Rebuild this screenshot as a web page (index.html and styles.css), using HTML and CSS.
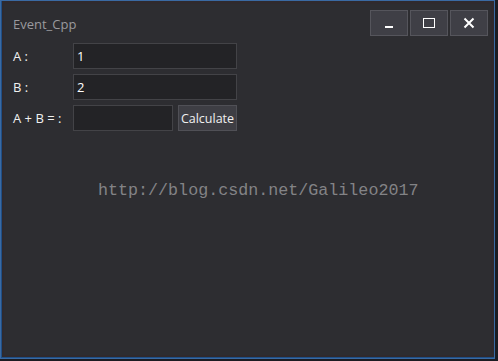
FILE: index.html
```html
<!DOCTYPE html>
<html lang="en">
<head>
    <meta charset="UTF-8">
    <title>Event_Cpp</title>
    <link rel="stylesheet" href="styles.css">
</head>
<body>
    <div class="window">
        <div class="titlebar">
            <span class="title">Event_Cpp</span>
            <div class="controls">
                <button class="ctrl"><span class="min-bar"></span></button>
                <button class="ctrl"><span class="max-box"></span></button>
                <button class="ctrl">
                    <svg width="12" height="12" viewBox="0 0 12 12">
                        <path d="M1.5 1.5 L10.5 10.5 M10.5 1.5 L1.5 10.5" stroke="#fff" stroke-width="2"/>
                    </svg>
                </button>
            </div>
        </div>

        <div class="form">
            <label class="lbl">A :</label>
            <input class="field" type="text" value="1">

            <label class="lbl">B :</label>
            <input class="field" type="text" value="2">

            <label class="lbl">A + B = :</label>
            <div class="result-row">
                <input class="field short" type="text" value="">
                <button class="calc">Calculate</button>
            </div>
        </div>

        <div class="watermark">http://blog.csdn.net/Galileo2017</div>
    </div>
</body>
</html>
```

FILE: styles.css
```css
* {
    margin: 0;
    padding: 0;
    box-sizing: border-box;
    font-family: 'Open Sans', 'Noto Sans', sans-serif;
}

body {
    width: 498px;
    height: 361px;
    background: #1b1c22;
    overflow: hidden;
}

.window {
    position: relative;
    width: 495px;
    height: 359px;
    background: #2d2d31;
    border: 1px solid #3a6aa3;
    box-shadow: inset 1px 0 0 #1f4f86, inset 0 -1px 0 #1f4f86, inset 0 0 0 3px #2f2a2e;
}

.titlebar {
    display: flex;
    justify-content: space-between;
    align-items: flex-start;
    padding: 9px 6px 0 12px;
}

.title {
    color: #9a9a9e;
    font-size: 13px;
    padding-top: 5px;
}

.controls {
    display: flex;
    gap: 2px;
}

.ctrl {
    width: 38px;
    height: 26px;
    background: #3f3f46;
    border: 1px solid #55555c;
    display: flex;
    align-items: center;
    justify-content: center;
}

.min-bar {
    display: block;
    width: 8px;
    height: 2px;
    background: #fff;
    margin-top: 8px;
}

.max-box {
    display: block;
    width: 12px;
    height: 10px;
    border: 1.5px solid #fff;
}

.form {
    display: grid;
    grid-template-columns: 60px 164px;
    row-gap: 5px;
    padding: 7px 0 0 12px;
    align-items: center;
}

.lbl {
    color: #f0f0f0;
    font-size: 13px;
}

.field {
    height: 26px;
    background: #232326;
    border: 1px solid #434347;
    color: #fff;
    font-size: 13px;
    padding: 0 3px;
    width: 100%;
    outline: none;
}

.result-row {
    display: flex;
    gap: 5px;
}

.field.short {
    width: 100px;
}

.calc {
    width: 59px;
    height: 26px;
    background: #3e3e44;
    border: 1px solid #505056;
    color: #f0f0f0;
    font-size: 12.5px;
}

.watermark {
    position: absolute;
    left: 97px;
    top: 180px;
    color: #838386;
    font-family: 'Liberation Mono', monospace;
    font-size: 16.7px;
}
```
